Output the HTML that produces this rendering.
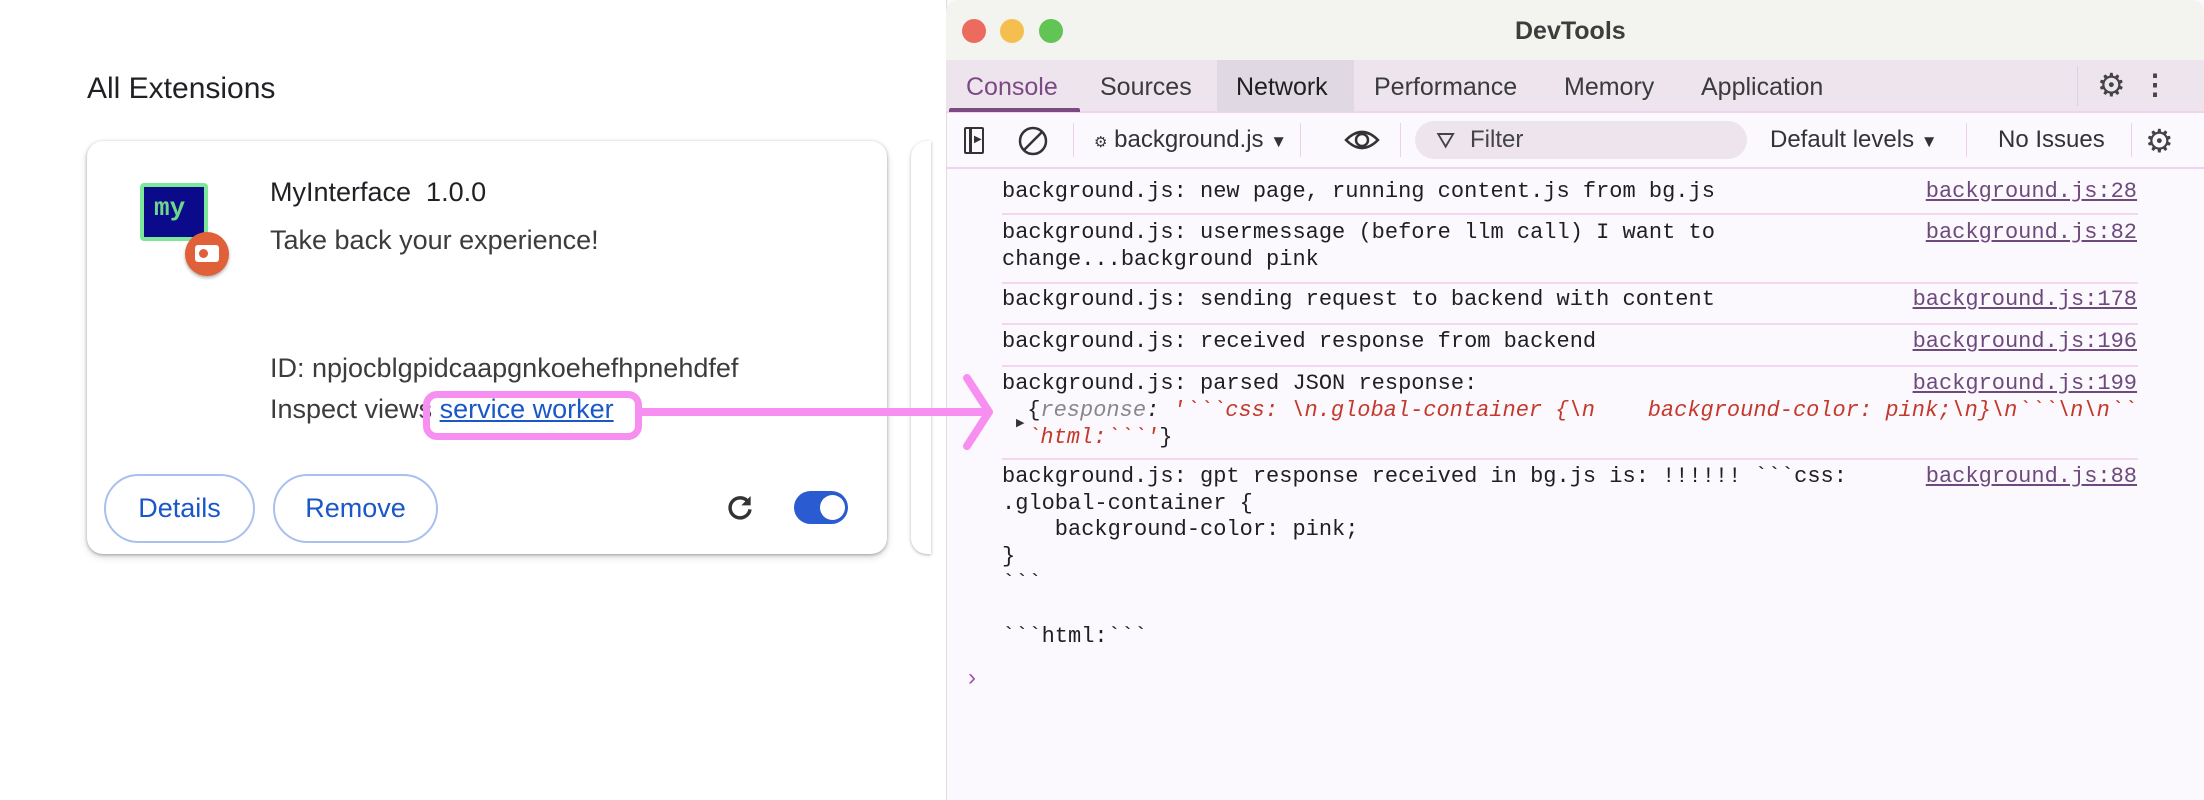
<!DOCTYPE html>
<html><head><meta charset="utf-8"><style>
*{margin:0;padding:0;box-sizing:border-box}
body{width:2204px;height:800px;background:#fff;position:relative;overflow:hidden;font-family:"Liberation Sans",sans-serif;color:#202124}
.a{position:absolute;white-space:nowrap}
.card{position:absolute;left:87px;top:141px;width:800px;height:413px;border-radius:16px;background:#fff;box-shadow:0 1px 3px rgba(0,0,0,.3),0 3px 8px rgba(0,0,0,.15)}
.btn{position:absolute;top:474px;height:69px;border:2px solid #a8c0f0;border-radius:35px;color:#1a57c9;font-size:27px;display:flex;align-items:center;justify-content:center}
.dt{position:absolute;left:946px;top:0;width:1258px;height:800px;background:#fcf9fe;border-left:1px solid #ddd}
.mono{font-family:"Liberation Mono",monospace;font-size:22px;line-height:26.7px;color:#1f1f1f}
.lnk{position:absolute;right:67px;color:#6e4a7c;text-decoration:underline;font-family:"Liberation Mono",monospace;font-size:22px}
.sep{position:absolute;left:1002px;width:1136px;height:2px;background:#f3d6f0}
.tab{position:absolute;top:73px;font-size:25px;color:#3b3b3b}
</style></head><body>
<div class="a" style="left:87px;top:72px;font-size:30px;color:#202124">All Extensions</div>
<div style="position:absolute;left:911px;top:141px;width:20px;height:413px;border-radius:16px 0 0 16px;box-shadow:0 1px 3px rgba(0,0,0,.3)"></div>
<div class="card"></div>
<div style="position:absolute;left:140px;top:183px;width:68px;height:58px;background:#0a0a8a;border:4px solid #7ee89a;border-radius:4px"></div>
<div class="a" style="left:154px;top:193px;font-family:'Liberation Mono',monospace;font-weight:bold;font-size:26px;color:#6ed88a">my</div>
<div style="position:absolute;left:185px;top:232px;width:44px;height:44px;border-radius:50%;background:#e0603a;box-shadow:0 2px 3px rgba(0,0,0,.3)"></div>
<div style="position:absolute;left:195px;top:245px;width:24px;height:17px;background:#fff;border-radius:3px"></div>
<div style="position:absolute;left:199px;top:249px;width:9px;height:9px;border-radius:50%;background:#e0603a"></div>
<div class="a" style="left:270px;top:177px;font-size:27px">MyInterface&nbsp;&nbsp;1.0.0</div>
<div class="a" style="left:270px;top:225px;font-size:27px;color:#3c3c3c">Take back your experience!</div>
<div class="a" style="left:270px;top:353px;font-size:27px;color:#3c3c3c">ID: npjocblgpidcaapgnkoehefhpnehdfef</div>
<div class="a" style="left:270px;top:394px;font-size:27px;color:#3c3c3c">Inspect views <span style="color:#1a57c9;text-decoration:underline">service worker</span></div>
<div class="btn" style="left:104px;width:151px">Details</div>
<div class="btn" style="left:273px;width:165px">Remove</div>
<svg style="position:absolute;left:724px;top:492px" width="32" height="32" viewBox="0 0 24 24"><path d="M18.5 8A7.5 7.5 0 1 0 19.5 13" fill="none" stroke="#333" stroke-width="2.6"/><path d="M20 3v7h-7z" fill="#333"/></svg>
<div style="position:absolute;left:794px;top:491px;width:54px;height:33px;border-radius:17px;background:#2a5bd0"></div>
<div style="position:absolute;left:820px;top:495px;width:25px;height:25px;border-radius:50%;background:#fff"></div>
<div class="dt"></div>
<div style="position:absolute;left:946px;top:0;width:1258px;height:60px;background:#f3f3ef;border-radius:12px 12px 0 0"></div>
<div style="position:absolute;left:962px;top:19px;width:24px;height:24px;border-radius:50%;background:#ed6a5e"></div>
<div style="position:absolute;left:1000px;top:19px;width:24px;height:24px;border-radius:50%;background:#f5bf4f"></div>
<div style="position:absolute;left:1039px;top:19px;width:24px;height:24px;border-radius:50%;background:#61c454"></div>
<div class="a" style="left:1515px;top:17px;font-size:25px;font-weight:bold;color:#3d3d3d">DevTools</div>
<div style="position:absolute;left:946px;top:60px;width:1258px;height:53px;background:#ede4ee;border-bottom:2px solid #f0d4ee"></div>
<div style="position:absolute;left:1217px;top:60px;width:137px;height:52px;background:#e0d8e2"></div>
<div style="position:absolute;left:949px;top:108px;width:131px;height:4px;background:#7b4a82;border-radius:2px 2px 0 0"></div>
<div class="tab" style="left:966px;color:#7b4a82">Console</div>
<div class="tab" style="left:1100px">Sources</div>
<div class="tab" style="left:1236px;color:#1f1f1f">Network</div>
<div class="tab" style="left:1374px">Performance</div>
<div class="tab" style="left:1564px">Memory</div>
<div class="tab" style="left:1701px">Application</div>
<div style="position:absolute;left:2077px;top:66px;width:1px;height:40px;background:#e0d0e0"></div>
<div class="a" style="left:2097px;top:66px;font-size:32px;color:#444">⚙</div>
<div class="a" style="left:2141px;top:68px;font-size:28px;color:#444;font-weight:bold">⋮</div>
<div style="position:absolute;left:964px;top:127px;width:20px;height:27px;border:2.5px solid #333;border-radius:2px"></div>
<div style="position:absolute;left:969px;top:127px;width:2.5px;height:27px;background:#333"></div>
<div class="a" style="left:974px;top:134px;font-size:10px;color:#333">▶</div>
<svg style="position:absolute;left:1017px;top:125px" width="32" height="32" viewBox="0 0 32 32"><circle cx="16" cy="16" r="13" fill="none" stroke="#333" stroke-width="2.5"/><path d="M7 25L25 7" stroke="#333" stroke-width="2.5"/></svg>
<div style="position:absolute;left:1073px;top:123px;width:1px;height:34px;background:#ecd0ec"></div>
<div class="a" style="left:1094px;top:126px;font-size:24px;color:#333"><span style="font-size:15px">⚙</span> background.js <span style="font-size:17px">▼</span></div>
<div style="position:absolute;left:1300px;top:123px;width:1px;height:34px;background:#ecd0ec"></div>
<svg style="position:absolute;left:1343px;top:124px" width="38" height="32" viewBox="0 0 38 32"><path d="M3 16Q19 0 35 16Q19 32 3 16Z" fill="none" stroke="#333" stroke-width="2.5"/><circle cx="19" cy="16" r="6" fill="none" stroke="#333" stroke-width="2.5"/></svg>
<div style="position:absolute;left:1400px;top:123px;width:1px;height:34px;background:#ecd0ec"></div>
<div style="position:absolute;left:1415px;top:121px;width:332px;height:38px;border-radius:19px;background:#ede4ee"></div>
<div class="a" style="left:1436px;top:127px;font-size:23px;color:#444">⛛</div>
<div class="a" style="left:1470px;top:126px;font-size:24px;color:#444">Filter</div>
<div class="a" style="left:1770px;top:126px;font-size:24px;color:#333">Default levels <span style="font-size:17px">▼</span></div>
<div style="position:absolute;left:1966px;top:123px;width:1px;height:34px;background:#ecd0ec"></div>
<div class="a" style="left:1998px;top:126px;font-size:24px;color:#333">No Issues</div>
<div style="position:absolute;left:2131px;top:123px;width:1px;height:34px;background:#ecd0ec"></div>
<div class="a" style="left:2145px;top:122px;font-size:32px;color:#444">⚙</div>
<div style="position:absolute;left:946px;top:167px;width:1258px;height:2px;background:#f0d4ee"></div>
<div class="a mono" style="left:1002px;top:179px">background.js: new page, running content.js from bg.js</div>
<div class="lnk" style="top:179px">background.js:28</div>
<div class="sep" style="top:213px"></div>
<div class="a mono" style="left:1002px;top:220px">background.js: usermessage (before llm call) I want to<br>change...background pink</div>
<div class="lnk" style="top:220px">background.js:82</div>
<div class="sep" style="top:282px"></div>
<div class="a mono" style="left:1002px;top:287px">background.js: sending request to backend with content</div>
<div class="lnk" style="top:287px">background.js:178</div>
<div class="sep" style="top:323px"></div>
<div class="a mono" style="left:1002px;top:329px">background.js: received response from backend</div>
<div class="lnk" style="top:329px">background.js:196</div>
<div class="sep" style="top:365px"></div>
<div class="a mono" style="left:1002px;top:371px">background.js: parsed JSON response:</div>
<div class="lnk" style="top:371px">background.js:199</div>
<div class="a mono" style="left:1014px;top:398px;font-style:italic;color:#c33a2c">&nbsp;<span style="color:#222;font-style:normal">{</span><span style="color:#888">response</span><span style="color:#222">:</span> '&#96;&#96;&#96;css: \n.global-container {\n&nbsp;&nbsp;&nbsp; background-color: pink;\n}\n&#96;&#96;&#96;\n\n&#96;&#96;<br>&nbsp;&#96;html:&#96;&#96;&#96;'<span style="color:#222;font-style:normal">}</span></div>
<div class="a" style="left:1016px;top:416px;font-size:11px;color:#333">▶</div>
<div class="sep" style="top:458px"></div>
<div class="a mono" style="left:1002px;top:464px">background.js: gpt response received in bg.js is: !!!!!! &#96;&#96;&#96;css:<br>.global-container {<br>&nbsp;&nbsp;&nbsp;&nbsp;background-color: pink;<br>}<br>&#96;&#96;&#96;<br><br>&#96;&#96;&#96;html:&#96;&#96;&#96;</div>
<div class="lnk" style="top:464px">background.js:88</div>
<div class="a" style="left:968px;top:664px;font-size:24px;color:#9a5aa8">›</div>
<div style="position:absolute;left:423px;top:391px;width:219px;height:49px;border:7px solid #f78ff0;border-radius:14px"></div>
<div style="position:absolute;left:642px;top:408px;width:343px;height:8px;background:#f78ff0"></div>
<svg style="position:absolute;left:955px;top:370px" width="50" height="85" viewBox="0 0 50 85"><path d="M12 8L34 42L12 76" fill="none" stroke="#f78ff0" stroke-width="8" stroke-linecap="round" stroke-linejoin="round"/></svg>
</body></html>
